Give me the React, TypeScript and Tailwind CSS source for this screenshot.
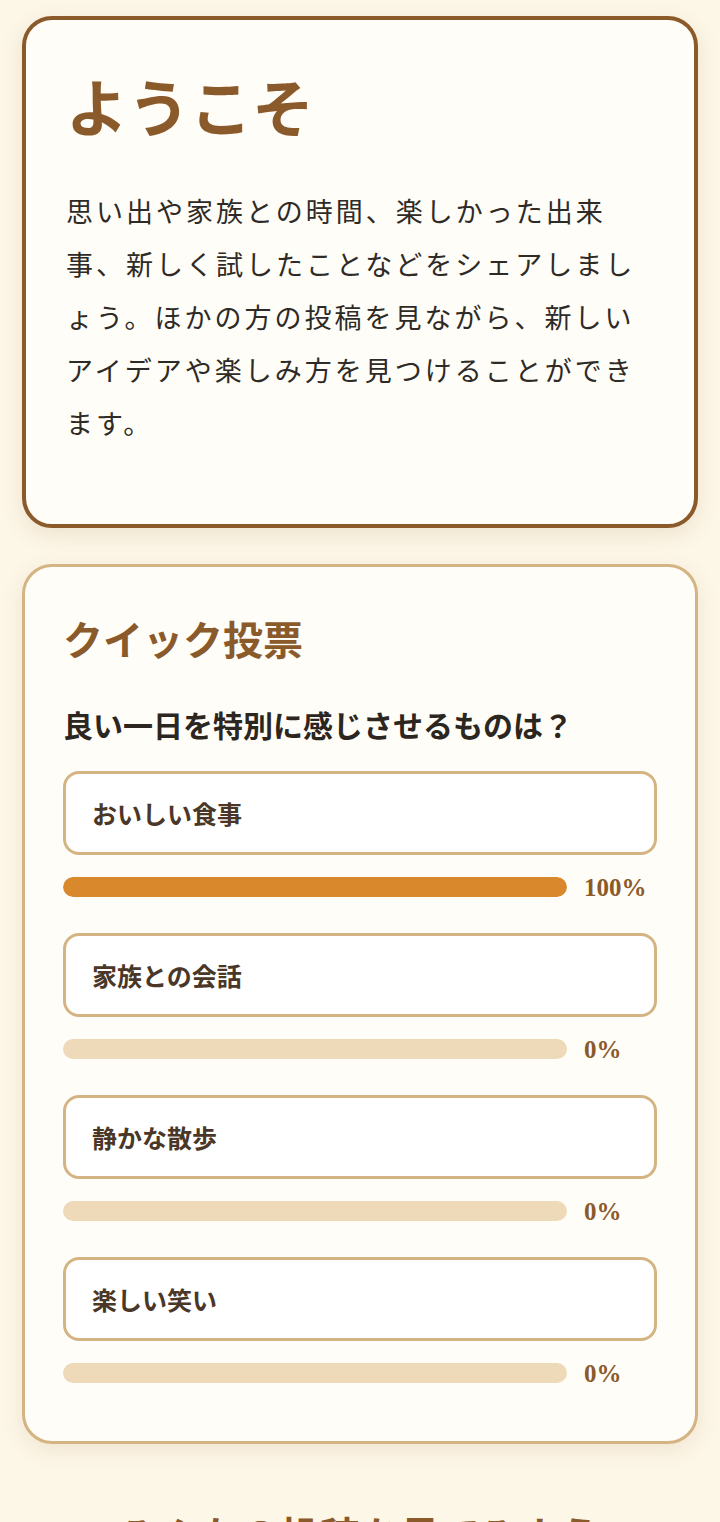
import React from "react";

const options = [
  { label: "おいしい食事", pct: 100 },
  { label: "家族との会話", pct: 0 },
  { label: "静かな散歩", pct: 0 },
  { label: "楽しい笑い", pct: 0 },
];

export default function App() {
  return (
    <div
      className="min-h-screen bg-[#fdf7e8] px-[22px] pt-[16px] pb-10"
      style={{ fontFamily: '"Noto Sans CJK JP", "Noto Sans", sans-serif' }}
    >
      <section className="rounded-[30px] border-[4px] border-[#8b5a2b] bg-[#fffdf7] px-[40px] pt-[46px] pb-[75px] shadow-[0_6px_22px_rgba(139,90,43,0.14)]">
        <h1 className="text-[62px] font-bold leading-[78px] text-[#8b5a2b]">
          ようこそ
        </h1>
        <p className="mt-[40px] text-[27px] leading-[53px] tracking-[3px] text-[#2e2a26]">
          思い出や家族との時間、楽しかった出来事、新しく試したことなどをシェアしましょう。ほかの方の投稿を見ながら、新しいアイデアや楽しみ方を見つけることができます。
        </p>
      </section>

      <section className="mt-[36px] rounded-[30px] border-[3px] border-[#d4b483] bg-[#fffdf7] px-[38px] pt-[47px] pb-[58px] shadow-[0_6px_22px_rgba(139,90,43,0.12)]">
        <h2 className="text-[40px] font-bold leading-[48px] text-[#8b5a2b]">
          クイック投票
        </h2>
        <p className="mt-[42px] text-[30px] font-bold leading-[40px] text-[#2c2620]">
          良い一日を特別に感じさせるものは？
        </p>
        <div className="mt-[27px] flex flex-col gap-[36px]">
          {options.map((o) => (
            <div key={o.label}>
              <div className="flex h-[84px] items-center rounded-[16px] border-[3px] border-[#d4b483] bg-white px-[26px] pt-[2px]">
                <span className="text-[25px] font-bold text-[#4a3728]">{o.label}</span>
              </div>
              <div className="mt-[22px] flex h-[20px] items-center gap-[17px]">
                <div className="h-[20px] flex-1 overflow-hidden rounded-full bg-[#eed9b9]">
                  <div
                    className="h-full rounded-full bg-[#d9892c]"
                    style={{ width: `${o.pct}%` }}
                  />
                </div>
                <span
                  className="w-[73px] text-[25px] font-bold leading-none text-[#8b5a2b]"
                  style={{ fontFamily: '"Liberation Serif", serif' }}
                >
                  {o.pct}%
                </span>
              </div>
            </div>
          ))}
        </div>
      </section>

      <h2 className="mt-[66px] text-center text-[40px] font-bold leading-[48px] text-[#8b5a2b]">
        みんなの投稿を見てみよう
      </h2>
    </div>
  );
}
